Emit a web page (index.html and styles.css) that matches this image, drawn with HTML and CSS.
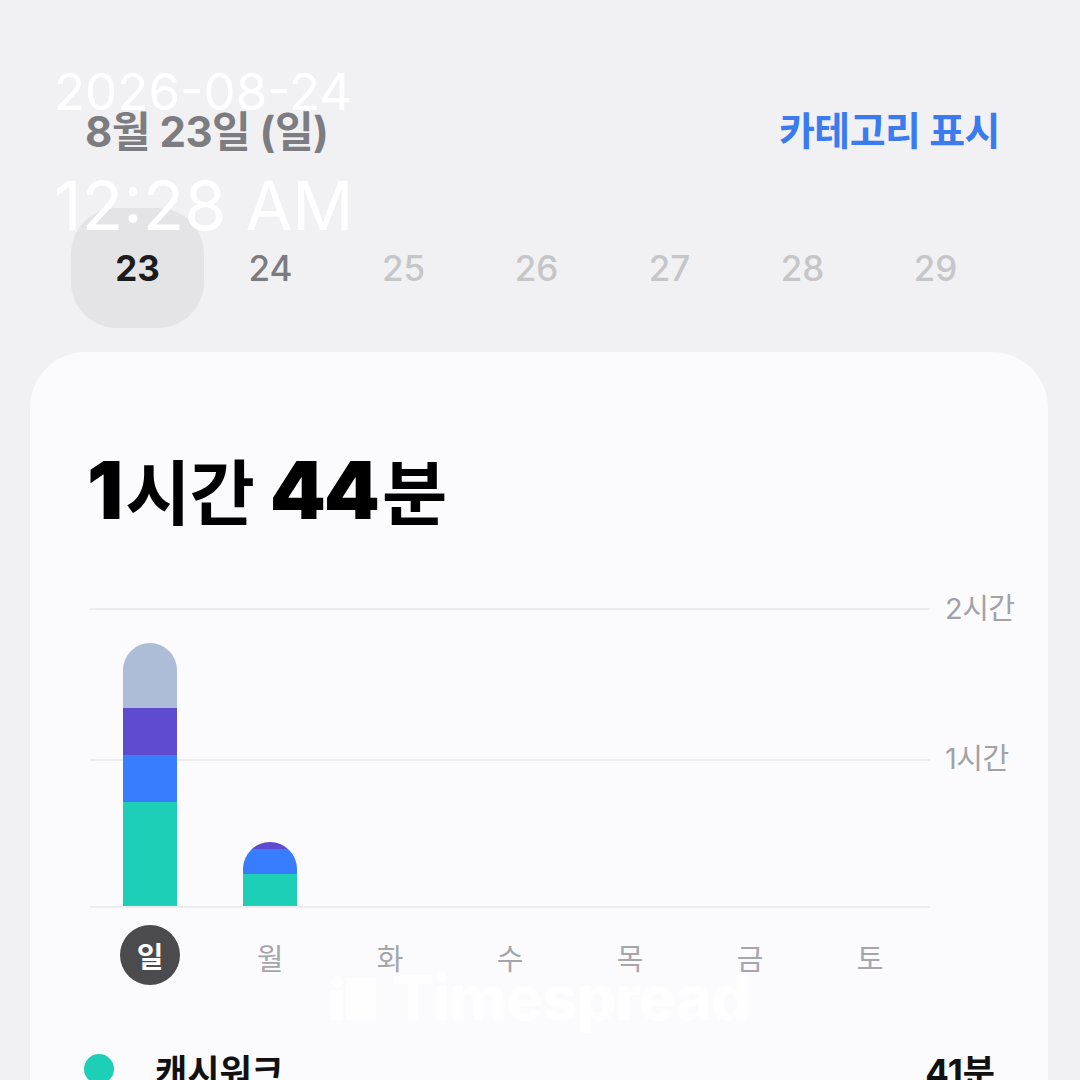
FILE: index.html
```html
<!DOCTYPE html>
<html lang="ko">
<head>
  <meta charset="UTF-8">
  <meta name="viewport" content="width=device-width, initial-scale=1.0">
  <title>스크린 타임</title>
  <link rel="stylesheet" href="styles.css">
</head>
<body>
  <header class="top">
    <span class="date">8월 23일 (일)</span>
    <span class="toggle">카테고리 표시</span>
  </header>

  <div class="days">
    <div class="day selected">23</div>
    <div class="day past">24</div>
    <div class="day">25</div>
    <div class="day">26</div>
    <div class="day">27</div>
    <div class="day">28</div>
    <div class="day">29</div>
  </div>

  <section class="card">
    <h1 class="total"><b>1</b>시간 <b>44</b>분</h1>

    <div class="chart">
      <div class="plot">
        <div class="col">
          <div class="bar" style="height: 263px">
            <div class="seg other" style="height: 65px"></div>
            <div class="seg purple" style="height: 47px"></div>
            <div class="seg blue" style="height: 47px"></div>
            <div class="seg teal" style="height: 104px"></div>
          </div>
        </div>
        <div class="col">
          <div class="bar" style="height: 64px">
            <div class="seg purple" style="height: 7px"></div>
            <div class="seg blue" style="height: 25px"></div>
            <div class="seg teal" style="height: 32px"></div>
          </div>
        </div>
        <div class="col"></div>
        <div class="col"></div>
        <div class="col"></div>
        <div class="col"></div>
        <div class="col"></div>
      </div>
      <div class="axis">
        <span>2시간</span>
        <span>1시간</span>
      </div>
    </div>

    <div class="weekdays">
      <span class="wd active">일</span>
      <span class="wd">월</span>
      <span class="wd">화</span>
      <span class="wd">수</span>
      <span class="wd">목</span>
      <span class="wd">금</span>
      <span class="wd">토</span>
    </div>

    <div class="app-row">
      <span class="dot teal"></span>
      <span class="app-name">캐시워크</span>
      <span class="app-time">41분</span>
    </div>
  </section>

  <div class="stamp">
    <div class="stamp-date">2026-08-24</div>
    <div class="stamp-time">12:28 AM</div>
  </div>

  <div class="watermark">
    <svg width="46" height="46" viewBox="0 0 46 46">
      <circle cx="7" cy="7" r="6" fill="#fff"/>
      <rect x="1" y="15" width="12" height="30" fill="#fff"/>
      <rect x="16" y="3" width="30" height="42" fill="#fff"/>
    </svg>
    <span>Timespread</span>
  </div>
</body>
</html>
```

FILE: styles.css
```css
body {
  margin: 0;
  background-color: #f1f1f3;
  font-family: 'Inter', 'Noto Sans CJK KR', sans-serif;
  width: 1080px;
  height: 1080px;
  overflow: hidden;
  position: relative;
}
.top {
  display: flex;
  justify-content: space-between;
  align-items: center;
  padding: 102px 80px 0 85px;
  height: 52px;
}
.date {
  font-size: 42px;
  font-weight: 700;
  color: #7d7d81;
  letter-spacing: -0.5px;
}
.toggle {
  font-size: 39px;
  font-weight: 700;
  color: #3a7bf0;
  letter-spacing: -0.5px;
}
.days {
  display: flex;
  margin: 54px 0 0 71px;
}
.day {
  width: 133px;
  height: 120px;
  display: flex;
  align-items: center;
  justify-content: center;
  font-size: 35px;
  font-weight: 500;
  color: #c6c6c8;
}
.day.past {
  color: #7c7c80;
}
.day.selected {
  background-color: #e4e4e6;
  border-radius: 46px;
  color: #1c1c1e;
  font-weight: 700;
}
.card {
  margin: 24px 32px 0 30px;
  background-color: #fbfbfd;
  border-radius: 56px 56px 0 0;
  height: 800px;
  padding: 88px 0 0 0;
}
.total {
  margin: 0 0 0 57px;
  height: 100px;
  line-height: 100px;
  font-size: 71px;
  font-weight: 700;
  color: #000;
  letter-spacing: -1px;
}
.total b {
  font-size: 80px;
  letter-spacing: -2px;
  margin-right: 4px;
}
.chart {
  display: flex;
  margin: 68px 0 0 60px;
}
.plot {
  width: 840px;
  height: 296px;
  border-top: 2px solid #ececee;
  border-bottom: 2px solid #ececee;
  background: linear-gradient(#ececee, #ececee) 0 149px / 100% 2px no-repeat;
  display: flex;
  align-items: flex-end;
}
.col {
  width: 120px;
  display: flex;
  justify-content: center;
}
.bar {
  width: 54px;
  border-radius: 27px 27px 0 0;
  overflow: hidden;
  display: flex;
  flex-direction: column;
}
.seg.other { background-color: #adbdd7; }
.seg.purple { background-color: #5e4bcf; }
.seg.blue { background-color: #377dfe; }
.seg.teal { background-color: #1ecfb7; }
.axis {
  display: flex;
  flex-direction: column;
  margin: -17px 0 0 15px;
}
.axis span {
  height: 150px;
  line-height: 36px;
  font-size: 29px;
  color: #a2a2a6;
  letter-spacing: -0.5px;
}
.weekdays {
  display: flex;
  margin: 17px 0 0 60px;
}
.wd {
  width: 120px;
  height: 60px;
  display: flex;
  align-items: center;
  justify-content: center;
  font-size: 29px;
  color: #a6a6aa;
  padding-top: 4px;
  box-sizing: border-box;
}
.wd.active {
  width: 60px;
  margin: 0 30px;
  padding-top: 0;
  border-radius: 50%;
  background-color: #4b4b4d;
  color: #fff;
  font-weight: 700;
}
.app-row {
  display: flex;
  align-items: center;
  margin: 64px 53px 0 54px;
  height: 40px;
}
.dot {
  width: 30px;
  height: 30px;
  border-radius: 50%;
}
.dot.teal { background-color: #1ecfb7; }
.app-name {
  margin-left: 41px;
  font-size: 35px;
  font-weight: 700;
  color: #111;
  flex: 1;
}
.app-time {
  font-size: 35px;
  font-weight: 700;
  color: #111;
}
.stamp {
  position: absolute;
  left: 54px;
  top: 60px;
  color: #fff;
}
.stamp-date {
  font-size: 51px;
  line-height: 64px;
}
.stamp-time {
  font-size: 68px;
  line-height: 86px;
  margin-top: 38px;
}
.watermark {
  position: absolute;
  left: 330px;
  top: 973px;
  display: flex;
  align-items: center;
  gap: 16px;
  color: rgba(255, 255, 255, 0.92);
  font-size: 62px;
  font-weight: 800;
  letter-spacing: -1px;
  opacity: 0.9;
}
.watermark span {
  line-height: 50px;
}
```
